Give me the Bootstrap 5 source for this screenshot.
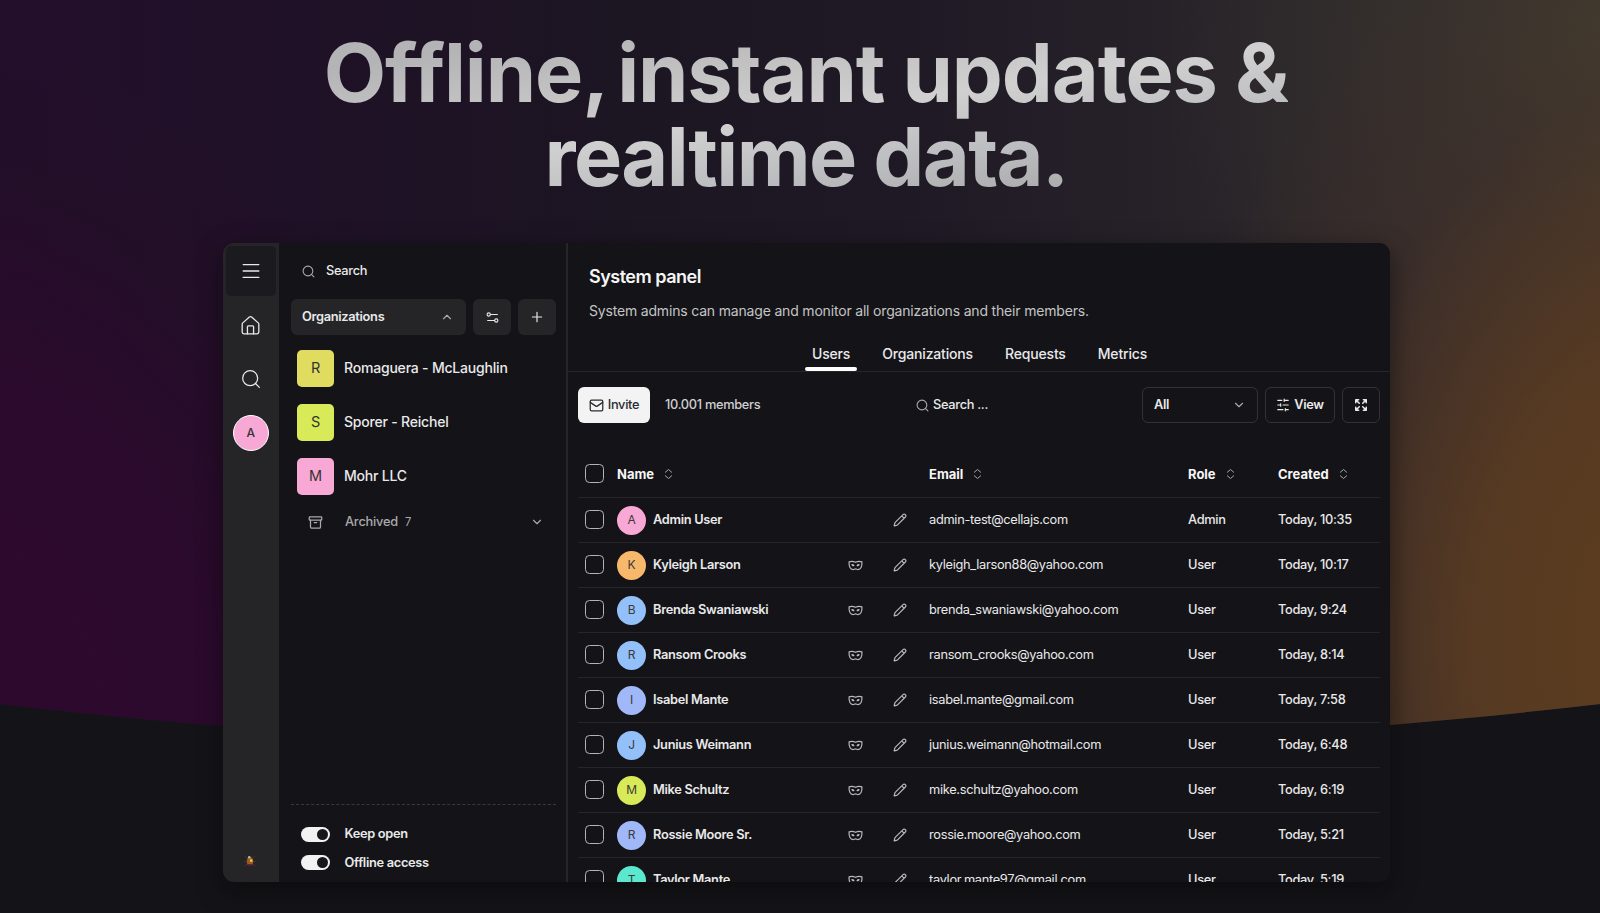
<!DOCTYPE html>
<html lang="en">
<head>
<meta charset="utf-8">
<meta name="viewport" content="width=device-width, initial-scale=1">
<title>Offline, instant updates &amp; realtime data.</title>
<link href="https://cdn.jsdelivr.net/npm/bootstrap@5.3.0/dist/css/bootstrap.min.css" rel="stylesheet">
<style>
:root{--ink:#141418;--rail:#252527;--line:#26262a;--fg:#e9e9ea}
html,body{height:913px;overflow:hidden}
body{background:var(--ink);color:var(--fg);font-family:Inter,"Liberation Sans",sans-serif;font-size:12.8px;letter-spacing:-.3px;line-height:20px}
svg{fill:none;stroke:currentColor;stroke-width:1.5;stroke-linecap:round;stroke-linejoin:round;display:block;flex:none}
svg.s1{stroke-width:1.1}
svg.s2{stroke-width:2}
svg.s3{stroke-width:2.6}
.stage{width:1600px;height:913px;isolation:isolate}
.backdrop{inset:0;z-index:-1;clip-path:circle(6980px at 50% -6230px);
background:radial-gradient(ellipse 540px 760px at 1680px 640px,rgba(96,62,30,.95) 0%,rgba(92,60,32,.85) 38%,rgba(66,46,40,.4) 72%,transparent 100%),
radial-gradient(ellipse 520px 420px at 1680px 60px,rgba(70,66,48,.9),rgba(60,56,46,.5) 45%,transparent),
radial-gradient(ellipse 560px 700px at -60px 740px,#2e082e 0,#2b0a2d 50%,rgba(36,14,38,.5) 80%,transparent 100%),
linear-gradient(90deg,#230e2b 0,#1f1127 300px,#1c1522 620px,#1f1925 900px,#272329 1200px,#382e2e 1600px)}
.headline{font-size:81px;line-height:84px;font-weight:700;letter-spacing:-1.1px;padding:31px 0 0 12px;height:243px;margin:0}
.headline span{background:linear-gradient(172deg,#b4b4b6 12%,#d0d0d0 48%,#bcbdc0 68%,#a4a4a4 92%);-webkit-background-clip:text;background-clip:text;color:transparent;display:inline-block;height:176px}
.headline b{font-weight:inherit;margin-right:-9px}
.headline em{font-style:normal;letter-spacing:-1.6px}
.window{width:1167px;height:639px;margin-left:223px;border-radius:11px;background:var(--ink);box-shadow:0 8px 24px 0 rgba(5,5,5,.5)}
.inner{border-radius:11px;overflow:hidden}
.rail{width:56px;background:var(--rail);padding:3px 1px 0 0}
.rail .tile{width:50px;height:50px;border-radius:5px;margin-bottom:4px}
.rail .tile.on{background:#1b1b1f}
.me{width:36px;height:36px;border-radius:50%;border:1.5px solid #fff;background:#f8a8d4;color:#333;font-weight:500;font-size:12px}
.side{width:289px;border-right:2px solid var(--line);padding:18px 10px 0 12px}
.soft{background:var(--rail);border-radius:6px;height:36px}
.sq{width:38px}
.org{height:54px;padding-left:6px;gap:10px;font-size:14px;letter-spacing:-.2px;font-weight:500}
.logo{width:37px;height:37px;border-radius:5px;color:#333;font-weight:400;font-size:14.5px}
.dim{color:#a9a9ab}
.dash{border-top:1px dashed #39393d}
.switchline{height:28.5px;gap:14.5px}
.toggle{width:29px;height:15px;border-radius:8px;background:#f2f2f2;padding:2px}
.toggle i{width:11px;height:11px;border-radius:50%;background:#17171b}
.title{font-size:18px;font-weight:600;letter-spacing:-.5px;line-height:24px;color:#f6f6f6;margin:0}
.desc{font-size:14px;letter-spacing:-.18px;color:#c4c4c6;margin:12px 0 0}
.tabs{border-bottom:1px solid var(--line);gap:18px;height:34px;padding-left:237px;font-size:14px;letter-spacing:-.17px;font-weight:500}
.tabs a{color:var(--fg);text-decoration:none;padding:6px 7px 0;height:33px;position:relative}
.tabs a.on::after{content:"";position:absolute;left:0;right:0;bottom:0;height:4px;border-radius:2px;background:#fff}
.tool{height:36px;border:1px solid #343235;border-radius:6px;font-weight:600}
.invite{background:#f3f3f3;color:#2c2c30;height:36px;width:72px;border-radius:6px;font-weight:500;gap:4px}
.grid-row{display:grid;grid-template-columns:39px 218.500px 45px 48.500px 259px 90px 102px;height:45px;align-items:center;border-bottom:1px solid var(--line)}
.box{width:19px;height:19px;border:1.5px solid #b4b4b4;border-radius:4.5px;margin:-1px 0 0 6.500px}
.ava{width:29px;height:29px;border-radius:50%;color:#3a3a3a;font-size:12px}
.head{font-weight:700;font-size:13px;letter-spacing:0;color:#f6f6f6;height:47px}
.pk{background:#f8a8d4}.or{background:#f8b86c}.bl{background:#93c0f8}.vi{background:#a0b8f8}.li{background:#d8ea58}.te{background:#5ce8cf}.ye{background:#e0dc60}
</style>
</head>
<body>
<svg width="0" height="0" class="position-absolute">
<defs>
<g id="mask"><path d="M1 2.600c1.800-.8 3.800-.7 6 .4 2.200-1.100 4.200-1.200 6-.4.300 4.600-1.200 7.200-3.700 7.200-.9 0-1.400-.6-2.300-.6s-1.400.6-2.300.6C2.200 9.800.7 7.200 1 2.600z"/><path d="M3.700 5.200c.8-.1 1.500.3 1.800 1-.8.2-1.600-.2-1.800-1zM10.300 5.200c-.8-.1-1.500.3-1.800 1 .8.2 1.600-.2 1.800-1z"/></g>
<g id="pen"><path d="M21.200 6.800a1 1 0 0 0-4-4L3.800 16.200a2 2 0 0 0-.5.800L2 21.400a.5.5 0 0 0 .6.600l4.400-1.300a2 2 0 0 0 .8-.5zM15 5l4 4"/></g>
<g id="lens"><circle cx="11" cy="11" r="9"/><path d="m22 22-4.600-4.600"/></g>
<g id="sort"><path d="m1.500 4.500 3.500-3 3.500 3M1.500 8.500l3.500 3 3.500-3"/></g>
<g id="down"><path d="m6 9 6 6 6-6"/></g>
</defs>
</svg>
<div class="stage position-relative">
<div class="backdrop position-absolute"></div>
<h1 class="headline text-center"><span>Offline<b>,</b> instant updates &amp;<br><em>realtime data.</em></span></h1>
<div class="window">
<div class="inner d-flex h-100">
<nav class="rail d-flex flex-column align-items-center flex-shrink-0">
<div class="tile on d-flex align-items-center justify-content-center"><svg width="22" height="22" viewBox="0 0 24 24"><path d="M3.500 5h17M3.500 12h17M3.500 19h17"/></svg></div>
<div class="tile d-flex align-items-center justify-content-center"><svg width="21" height="21" viewBox="0 0 24 24"><path d="M15.500 21.500v-8a1 1 0 0 0-1-1h-5a1 1 0 0 0-1 1v8"/><path d="M2.500 10.500a2 2 0 0 1 .7-1.500l7.500-6.600a2 2 0 0 1 2.600 0L20.800 9a2 2 0 0 1 .7 1.500v9a2 2 0 0 1-2 2h-15a2 2 0 0 1-2-2z"/></svg></div>
<div class="tile d-flex align-items-center justify-content-center"><svg width="20" height="20" viewBox="0 0 24 24"><use href="#lens"/></svg></div>
<div class="tile d-flex align-items-center justify-content-center"><div class="me d-flex align-items-center justify-content-center">A</div></div>
<svg class="mt-auto" style="color:#5a3427;margin-bottom:15px;margin-right:1px" width="12" height="12" viewBox="0 0 12 12"><path stroke-width=".7" d="M1 1l2.500 2.500M11 1 8.500 3.500M.5 6.500h3M11.500 6.500h-3M1 11l2.500-2M11 11 8.500 9"/><ellipse cx="6" cy="6.500" rx="3.200" ry="4.200" fill="#9a5a22" stroke="none"/><circle cx="5.300" cy="2.300" r="1.300" fill="#b9b9c0" stroke="none"/><circle cx="7.200" cy="5.700" r="1.400" fill="#f0c040" stroke="none"/><path stroke="#4a1535" d="M4.500 10h3"/></svg>
</nav>
<aside class="side d-flex flex-column flex-shrink-0">
<div class="d-flex align-items-center fw-medium" style="padding-left:11px;gap:11px"><svg class="dim s2" width="13" height="13" viewBox="0 0 24 24"><use href="#lens"/></svg><span>Search</span></div>
<div class="d-flex" style="gap:7px;margin-top:18px">
<div class="soft flex-fill d-flex align-items-center justify-content-between px-2"><span class="fw-semibold" style="margin-left:3px">Organizations</span><svg class="dim s2 me-1" width="14" height="14" viewBox="0 0 24 24"><path d="m6 15 6-6 6 6"/></svg></div>
<div class="soft sq d-flex align-items-center justify-content-center"><svg class="s2" width="13" height="13" viewBox="0 0 24 24"><circle cx="5" cy="6.500" r="3"/><path d="M8 6.500h13M3 17.500h13"/><circle cx="19" cy="17.500" r="3"/></svg></div>
<div class="soft sq d-flex align-items-center justify-content-center"><svg class="s2" width="14" height="14" viewBox="0 0 24 24"><path d="M4 12h16M12 4v16"/></svg></div>
</div>
<div style="margin-top:6px">
<div class="org d-flex align-items-center"><div class="logo ye d-flex align-items-center justify-content-center">R</div>Romaguera - McLaughlin</div>
<div class="org d-flex align-items-center"><div class="logo li d-flex align-items-center justify-content-center">S</div>Sporer - Reichel</div>
<div class="org d-flex align-items-center"><div class="logo pk d-flex align-items-center justify-content-center">M</div>Mohr LLC</div>
</div>
<div class="dim d-flex align-items-center fw-medium" style="height:38px;padding:0 12px 0 17px"><svg class="s2" width="15" height="15" viewBox="0 0 24 24"><rect x="2" y="3" width="20" height="5" rx="1"/><path d="M4 8v11a2 2 0 0 0 2 2h12a2 2 0 0 0 2-2V8M10 12h4"/></svg><span style="margin-left:22px;letter-spacing:-.2px">Archived</span><small class="fw-normal" style="margin-left:7px">7</small><svg class="ms-auto s2" width="14" height="14" viewBox="0 0 24 24"><use href="#down"/></svg></div>
<div class="dash mt-auto"></div>
<div class="fw-semibold" style="padding:15.5px 0 5px 10px">
<div class="switchline d-flex align-items-center"><div class="toggle d-flex justify-content-end"><i></i></div>Keep open</div>
<div class="switchline d-flex align-items-center"><div class="toggle d-flex justify-content-end"><i></i></div>Offline access</div>
</div>
</aside>
<main class="flex-fill">
<div style="padding:22px 0 0 21px">
<h2 class="title">System panel</h2>
<p class="desc">System admins can manage and monitor all organizations and their members.</p>
</div>
<nav class="tabs d-flex" style="margin-top:17px"><a class="on" href="#">Users</a><a href="#">Organizations</a><a href="#">Requests</a><a href="#">Metrics</a></nav>
<div class="d-flex align-items-center" style="padding:15px 10px 0;height:51px">
<div class="invite d-flex align-items-center justify-content-center"><svg class="s2" width="15" height="15" viewBox="0 0 24 24"><rect x="2" y="3.500" width="20" height="17" rx="2"/><path d="m22 7-8.900 6a2 2 0 0 1-2.200 0L2 7"/></svg>Invite</div>
<span class="fw-medium" style="margin-left:15px;width:251px;color:#cfcfd1">10.001 members</span>
<div class="d-flex align-items-center fw-medium" style="gap:4px"><svg class="dim s2" width="13" height="13" viewBox="0 0 24 24"><use href="#lens"/></svg>Search ...</div>
<div class="d-flex ms-auto" style="gap:7px">
<div class="tool d-flex align-items-center justify-content-between" style="width:116px;padding:0 11px 0 11px">All<svg class="dim s2" width="14" height="14" viewBox="0 0 24 24"><use href="#down"/></svg></div>
<div class="tool d-flex align-items-center justify-content-center" style="width:70px;gap:4px"><svg class="s2" width="14" height="14" viewBox="0 0 24 24"><path d="M21 4h-7M10 4H3M21 12h-9M8 12H3M21 20h-5M12 20H3M14 2v4M8 10v4M16 18v4"/></svg>View</div>
<div class="tool d-flex align-items-center justify-content-center" style="width:38px"><svg class="s3" width="14" height="14" viewBox="0 0 24 24"><path d="m15 15 6 6M15 9l6-6M21 16v5h-5M21 8V3h-5M3 16v5h5M3 21l6-6M3 8V3h5M9 9 3 3"/></svg></div>
</div>
</div>
<section id="table" style="padding:28px 10px 0"></section>
</main>
</div>
</div>
</div>
<script src="https://cdn.jsdelivr.net/npm/bootstrap@5.3.0/dist/js/bootstrap.bundle.min.js"></script>
<script>
const people=[["A","pk","Admin User","admin-test@cellajs.com","Admin","10:35"],["K","or","Kyleigh Larson","kyleigh_larson88@yahoo.com","User","10:17"],["B","bl","Brenda Swaniawski","brenda_swaniawski@yahoo.com","User","9:24"],["R","bl","Ransom Crooks","ransom_crooks@yahoo.com","User","8:14"],["I","vi","Isabel Mante","isabel.mante@gmail.com","User","7:58"],["J","bl","Junius Weimann","junius.weimann@hotmail.com","User","6:48"],["M","li","Mike Schultz","mike.schultz@yahoo.com","User","6:19"],["R","vi","Rossie Moore Sr.","rossie.moore@yahoo.com","User","5:21"],["T","te","Taylor Mante","taylor.mante97@gmail.com","User","5:19"]];
const sort='<svg class="dim s1" width="9" height="12" viewBox="0 0 10 13"><use href="#sort"/></svg>';
const th=t=>`<div class="d-flex align-items-center" style="gap:10px">${t}${sort}</div>`;
const icon=(id,c,w,h,vb)=>`<svg class="${c}" width="${w}" height="${h}" viewBox="${vb}" style="color:#b9b9bb"><use href="#${id}"/></svg>`;
document.getElementById("table").innerHTML=`<div class="grid-row head"><div class="box"></div>${th("Name")}<div></div><div></div>${th("Email")}${th("Role")}${th("Created")}</div>`+
people.map((p,i)=>`<div class="grid-row"><div class="box"></div><div class="d-flex align-items-center fw-semibold" style="gap:7px"><div class="ava ${p[1]} d-flex align-items-center justify-content-center fw-normal">${p[0]}</div>${p[2]}</div><div class="d-flex ps-2 ms-1">${i?icon("mask","s1",15,13,"0 0 14 12"):""}</div><div class="d-flex ps-2 ms-1">${icon("pen","s2",14,14,"0 0 24 24")}</div><div>${p[3]}</div><div class="fw-medium">${p[4]}</div><div class="fw-medium">Today, ${p[5]}</div></div>`).join("");
</script>
</body>
</html>
